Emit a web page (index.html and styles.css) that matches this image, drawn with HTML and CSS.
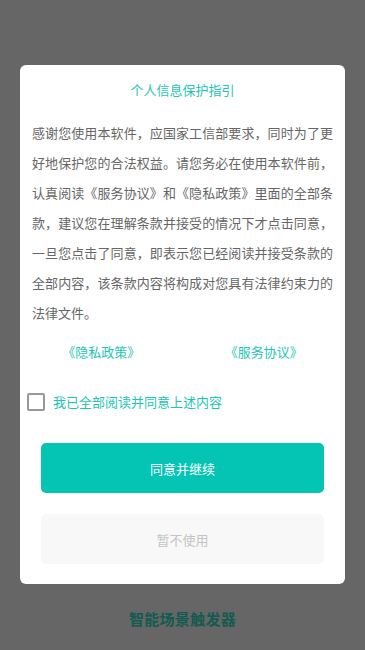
FILE: index.html
```html
<!DOCTYPE html>
<html lang="zh-CN">
<head>
<meta charset="utf-8">
<title>个人信息保护指引</title>
<link rel="stylesheet" href="styles.css">
</head>
<body>
<div class="screen">
  <div class="card">
    <div class="title">个人信息保护指引</div>
    <p class="body">感谢您使用本软件，应国家工信部要求，同时为了更好地保护您的合法权益。请您务必在使用本软件前，认真阅读《服务协议》和《隐私政策》里面的全部条款，建议您在理解条款并接受的情况下才点击同意，一旦您点击了同意，即表示您已经阅读并接受条款的全部内容，该条款内容将构成对您具有法律约束力的法律文件。</p>
    <div class="links">
      <span class="link">《隐私政策》</span>
      <span class="link">《服务协议》</span>
    </div>
    <label class="agree">
      <span class="box"></span>
      <span class="agree-text">我已全部阅读并同意上述内容</span>
    </label>
    <div class="btn primary">同意并继续</div>
    <div class="btn secondary">暂不使用</div>
  </div>
  <div class="app-name">智能场景触发器</div>
</div>
</body>
</html>
```
FILE: styles.css
```css
html, body {
  margin: 0;
  padding: 0;
  background: #666666;
}
body {
  font-family: "Noto Sans CJK SC", "Noto Sans", sans-serif;
  width: 365px;
  height: 650px;
  overflow: hidden;
}
.screen {
  display: flex;
  flex-direction: column;
  align-items: center;
  padding-top: 65px;
}
.card {
  width: 325px;
  box-sizing: border-box;
  background: #ffffff;
  border-radius: 6px;
  padding: 15px 12px 20px;
  display: flex;
  flex-direction: column;
}
.title {
  text-align: center;
  color: #1cc6b3;
  font-size: 13px;
  line-height: 20px;
}
.body {
  margin: 18px 0 0;
  font-size: 13px;
  line-height: 30px;
  color: #666666;
  text-align: justify;
}
.links {
  display: flex;
  margin: 14px -12px 0;
}
.link {
  flex: 1;
  text-align: center;
  color: #1cc6b3;
  font-size: 13px;
  line-height: 20px;
}
.agree {
  display: flex;
  align-items: center;
  margin: 30px 0 0 -5px;
  height: 20px;
}
.box {
  width: 14px;
  height: 14px;
  border: 2px solid #999999;
  border-radius: 2px;
  margin-right: 8px;
}
.agree-text {
  color: #1cc6b3;
  font-size: 13px;
  line-height: 20px;
}
.btn {
  margin: 0 9px;
  height: 50px;
  border-radius: 5px;
  display: flex;
  align-items: center;
  justify-content: center;
  font-size: 13px;
}
.primary {
  margin-top: 31px;
  background: #04c4b3;
  color: #ffffff;
}
.secondary {
  margin-top: 21px;
  background: #f8f8f8;
  color: #c4c4c4;
}
.app-name {
  margin-top: 25px;
  line-height: 20px;
  font-size: 15px;
  font-weight: bold;
  color: #135a50;
  letter-spacing: 0.3px;
}
```
